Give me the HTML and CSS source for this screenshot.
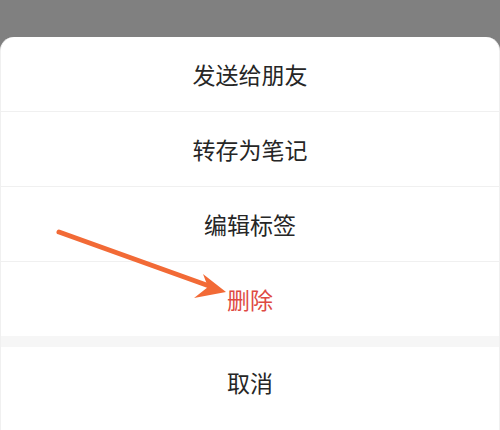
FILE: index.html
```html
<!DOCTYPE html>
<html lang="zh-CN">
<head>
    <meta charset="UTF-8">
    <meta name="viewport" content="width=device-width, initial-scale=1.0">
    <title>操作菜单</title>
    <link rel="stylesheet" href="styles.css">
</head>
<body>
    <div class="overlay"></div>
    <div class="sheet">
        <div class="group">
            <div class="item">发送给朋友</div>
            <div class="item">转存为笔记</div>
            <div class="item">编辑标签</div>
            <div class="item danger">删除</div>
        </div>
        <div class="divider"></div>
        <div class="item cancel">取消</div>
        <svg class="arrow" width="500" height="430" viewBox="0 0 500 430">
            <line x1="59" y1="232" x2="212" y2="287" stroke="#f26a36" stroke-width="5" stroke-linecap="round"/>
            <polygon points="226,292 203,274 208,287 194,298" fill="#f26a36"/>
        </svg>
    </div>
</body>
</html>
```
FILE: styles.css
```css
html, body {
    margin: 0;
    height: 100%;
}
body {
    font-family: "Noto Sans CJK SC", "Noto Sans", sans-serif;
    background-color: #808080;
    display: flex;
    flex-direction: column;
    overflow: hidden;
}
.overlay {
    height: 37px;
    flex-shrink: 0;
}
.sheet {
    position: relative;
    flex: 1;
    background-color: #ffffff;
    border-radius: 14px 14px 0 0;
    border-left: 1px solid #f0f0f0;
    border-right: 1px solid #f0f0f0;
}
.item {
    height: 74px;
    display: flex;
    align-items: center;
    justify-content: center;
    font-size: 23px;
    color: #262626;
    border-bottom: 1px solid #f0f0f0;
}
.group .item:last-child {
    border-bottom: none;
}
.danger {
    color: #de4a42;
}
.divider {
    height: 11px;
    background-color: #f6f6f6;
}
.cancel {
    height: 70px;
    border-bottom: none;
}
.arrow {
    position: absolute;
    top: -37px;
    left: -1px;
    pointer-events: none;
}
```
